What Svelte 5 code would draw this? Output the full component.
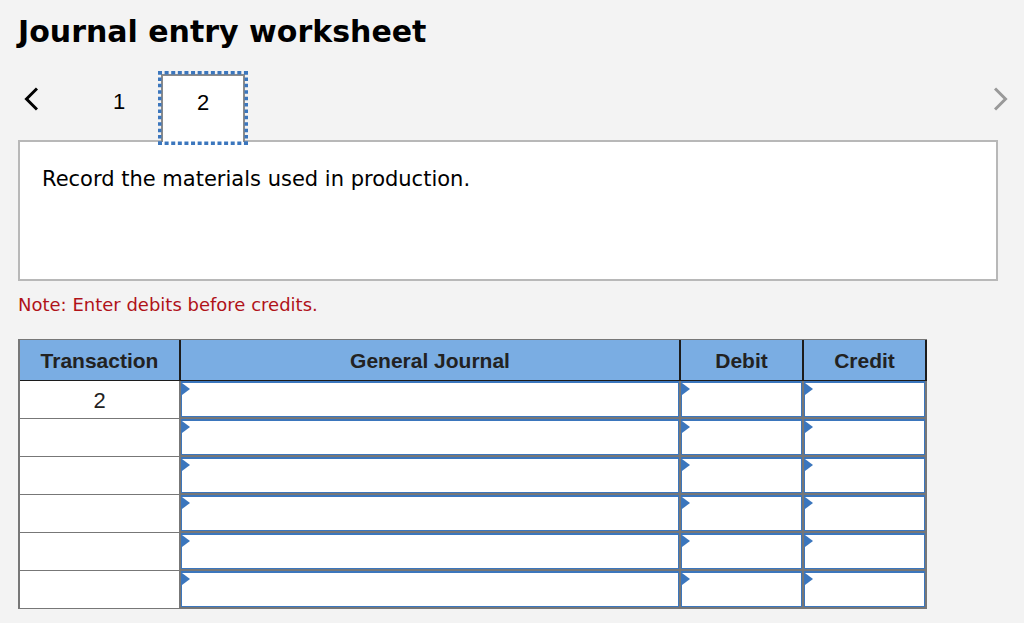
<script lang="ts">
	interface Linha {
		transaction: string;
		account: string;
		debit: string;
		credit: string;
	}

	const steps = [1, 2];
	let current = $state(2);

	let rows = $state<Linha[]>(
		Array.from({ length: 6 }, (_, i) => ({
			transaction: i === 0 ? '2' : '',
			account: '',
			debit: '',
			credit: ''
		}))
	);
</script>

<main class="worksheet">
	<h1>Journal entry worksheet</h1>

	<nav class="steps" aria-label="Journal entries">
		<button
			type="button"
			class="arrow arrow--prev"
			aria-label="Previous entry"
			onclick={() => (current = Math.max(1, current - 1))}
		>
			<svg width="16" height="24" viewBox="0 0 16 24" aria-hidden="true">
				<path d="M15 1.5 4.5 12l10.500 10.500" />
			</svg>
		</button>

		<div class="tabs">
			{#each steps as step}
				<button
					type="button"
					class="tab"
					class:active={step === current}
					aria-current={step === current ? 'step' : undefined}
					onclick={() => (current = step)}
				>
					{step}
					{#if step === current}
						<svg class="focus-ring" viewBox="0 0 90 74" aria-hidden="true">
							<path d="M0 1.75H90M0 72.25H90" stroke-dasharray="4 2.61" />
							<path d="M1.75 0V74M88.25 0V74" stroke-dasharray="3.5 2.91" />
						</svg>
					{/if}
				</button>
			{/each}
		</div>

		<button
			type="button"
			class="arrow arrow--next"
			aria-label="Next entry"
			onclick={() => (current = Math.min(steps.length, current + 1))}
		>
			<svg width="16" height="24" viewBox="0 0 16 24" aria-hidden="true">
				<path d="M1 1.5 11.500 12l-10.500 10.500" />
			</svg>
		</button>
	</nav>

	<section class="prompt">
		<p>Record the materials used in production.</p>
	</section>

	<p class="note">Note: Enter debits before credits.</p>

	<table>
		<colgroup>
			<col class="col-transaction" />
			<col />
			<col class="col-amount" />
			<col class="col-amount" />
		</colgroup>
		<thead>
			<tr>
				<th scope="col">Transaction</th>
				<th scope="col">General Journal</th>
				<th scope="col">Debit</th>
				<th scope="col">Credit</th>
			</tr>
		</thead>
		<tbody>
			{#each rows as row, i}
				<tr>
					<td class="transaction">{row.transaction}</td>
					<td class="entry">
						<input type="text" aria-label="General journal, line {i + 1}" bind:value={row.account} />
					</td>
					<td class="entry">
						<input type="text" aria-label="Debit, line {i + 1}" bind:value={row.debit} />
					</td>
					<td class="entry">
						<input type="text" aria-label="Credit, line {i + 1}" bind:value={row.credit} />
					</td>
				</tr>
			{/each}
		</tbody>
	</table>
</main>

<style>
	:global(body) {
		background: #f3f3f3;
	}
	.worksheet {
		padding: 14px 26px 14px 18px;
		font-family: Verdana, 'DejaVu Sans', sans-serif;
		color: #000;
	}
	h1 {
		margin: 0;
		font-size: 30px;
		line-height: 36px;
		font-weight: 700;
	}
	.steps {
		display: flex;
		align-items: flex-start;
		margin-top: 24px;
		height: 66px;
	}
	.steps button {
		background: none;
		border: 0;
		padding: 0;
		color: inherit;
		cursor: pointer;
	}
	.arrow {
		margin-top: 13px;
		height: 24px;
	}
	.arrow svg {
		display: block;
		fill: none;
		stroke: currentColor;
		stroke-width: 3;
	}
	.steps .arrow--prev {
		margin-left: 4px;
	}
	.steps .arrow--next {
		margin-left: auto;
		margin-right: -12px;
		color: #999;
	}
	.tabs {
		display: flex;
		margin-left: 39px;
	}
	.steps .tab {
		position: relative;
		width: 84px;
		height: 68px;
		padding-bottom: 12px;
		font: 22px/28px 'Liberation Sans', Arial, sans-serif;
	}
	.steps .tab.active {
		background: #fff;
		border: 2px solid #8a8a8a;
		border-bottom: 0;
	}
	/* dotted ring sits just outside the tab border */
	.focus-ring {
		position: absolute;
		top: -5px;
		left: -5px;
		width: 90px;
		height: 74px;
		fill: none;
		stroke: #3b76bd;
		stroke-width: 3.5;
		pointer-events: none;
	}
	.prompt {
		box-sizing: border-box;
		min-height: 141px;
		padding: 22px;
		border: 2px solid #b8b8b8;
		background: #fff;
		font-size: 21px;
		line-height: 30px;
	}
	.prompt p {
		margin: 0;
	}
	.note {
		margin: 12px 0 22px;
		font-size: 18px;
		line-height: 24px;
		color: #b01219;
	}
	table {
		width: calc(100% - 71px);
		table-layout: fixed;
		border-collapse: separate;
		border-spacing: 0;
		border-top: 1px solid #777;
		border-left: 2px solid #777;
		font-family: 'Liberation Sans', Arial, sans-serif;
		color: #222;
	}
	.col-transaction {
		width: 161px;
	}
	.col-amount {
		width: 123px;
	}
	th,
	td {
		box-sizing: border-box;
		padding: 0;
		text-align: center;
	}
	th {
		height: 41px;
		padding-top: 2px;
		background: #7aade3;
		border-right: 2px solid #1c1c1c;
		border-bottom: 1px solid #1c1c1c;
		font-size: 21px;
		line-height: 24px;
	}
	td {
		height: 38px;
		background: #fff;
		border-right: 2px solid #777;
		border-bottom: 2px solid #777;
	}
	.transaction {
		padding-top: 2px;
		border-bottom-width: 1px;
		font-size: 22px;
		line-height: 28px;
	}
	.entry {
		position: relative;
		vertical-align: top;
	}
	.entry::before {
		content: '';
		position: absolute;
		top: 2px;
		left: 1px;
		width: 8px;
		height: 12px;
		background: #3b76bd;
		clip-path: polygon(0 0, 100% 50%, 0 100%);
		pointer-events: none;
	}
	input {
		display: block;
		box-sizing: border-box;
		width: 100%;
		height: 36px;
		margin: 0;
		padding: 0 12px;
		border: 1px solid #3b76bd;
		border-top-width: 2px;
		border-radius: 0;
		background: #fff;
		font: inherit;
		font-size: 20px;
		outline: none;
	}
</style>
